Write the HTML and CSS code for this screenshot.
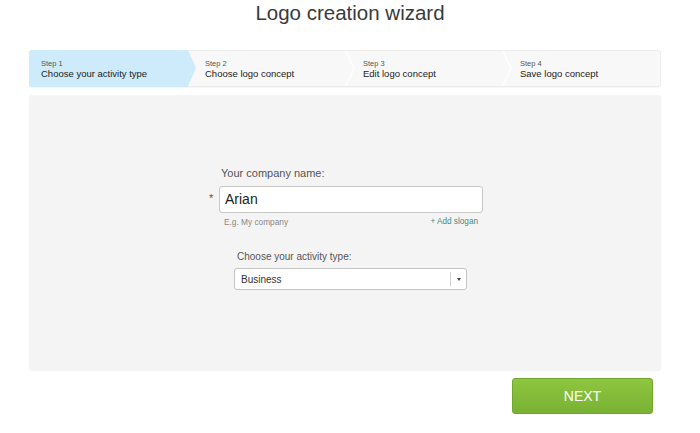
FILE: index.html
```html
<!DOCTYPE html>
<html>
<head>
<meta charset="utf-8">
<link rel="stylesheet" href="styles.css">
</head>
<body>
<div class="page">
  <h1 class="title">Logo creation wizard</h1>
  <div class="steps">
    <div class="step active"><span class="step-num">Step 1</span><span class="step-name">Choose your activity type</span></div>
    <div class="step"><span class="step-num">Step 2</span><span class="step-name">Choose logo concept</span></div>
    <div class="step"><span class="step-num">Step 3</span><span class="step-name">Edit logo concept</span></div>
    <div class="step last"><span class="step-num">Step 4</span><span class="step-name">Save logo concept</span></div>
  </div>
  <div class="panel">
    <div class="form">
      <label class="label">Your company name:</label>
      <div class="input-row">
        <span class="req">*</span>
        <div class="input">Arian</div>
      </div>
      <div class="hint-row">
        <span class="hint">E.g. My company</span>
        <span class="slogan">+ Add slogan</span>
      </div>
      <div class="activity">
        <label class="label small">Choose your activity type:</label>
        <div class="select">
          <span class="select-value">Business</span>
          <span class="select-arrow"><span class="caret"></span></span>
        </div>
      </div>
    </div>
  </div>
  <div class="actions">
    <button class="next">NEXT</button>
  </div>
</div>
</body>
</html>
```

FILE: styles.css
```css
* { box-sizing: border-box; }
html, body { margin: 0; padding: 0; background: #fff; }
body { font-family: "Liberation Sans", Arial, sans-serif; color: #333; }
.page { width: 700px; height: 433px; overflow: hidden; }

.title {
  margin: 0;
  height: 26px;
  line-height: 25px;
  font-size: 20.5px;
  font-weight: normal;
  color: #3a3a3a;
  text-align: center;
}

.steps {
  margin: 24px 39px 0 29px;
  width: 632px;
  height: 37px;
  display: grid;
  grid-template-columns: 158px 158px 157px 159px;
  background: #f8f8f8;
  border: 1px solid #ececec;
  border-radius: 3px;
  box-shadow: 0 1px 1px rgba(0,0,0,0.04);
}
.step {
  position: relative;
  display: flex;
  flex-direction: column;
  justify-content: center;
  padding-left: 11px;
  padding-top: 1px;
  color: #333;
}
.step + .step { padding-left: 17px; }
.step-num { font-size: 7.5px; line-height: 9px; color: #555; }
.step-name { font-size: 9.5px; line-height: 12px; color: #222; }

.step.active { background: #cdebfb; margin: -1px 0 -1px -1px; padding-left: 12px; border-radius: 3px 0 0 3px; z-index: 2; }
.step.active::after {
  content: "";
  position: absolute;
  left: 100%;
  top: 0;
  border-left: 8px solid #cdebfb;
  border-top: 18.5px solid transparent;
  border-bottom: 18.5px solid transparent;
}
.step:not(.active):not(.last)::after {
  content: "";
  position: absolute;
  right: -9px;
  top: 0;
  width: 10px;
  height: 35px;
  background: #fdfdfd;
  clip-path: polygon(0 0, 2px 0, 10px 50%, 2px 100%, 0 100%, 8px 50%);
  z-index: 1;
}

.panel {
  margin: 8px 0 0 29px;
  width: 632px;
  height: 275px;
  background: #f4f4f4;
  border-radius: 3px;
  box-shadow: 0 1px 1px rgba(0,0,0,0.05);
  padding: 71px 0 0 180px;
}
.form { width: 310px; display: flex; flex-direction: column; }
.label { display: block; font-size: 11px; line-height: 14px; color: #555; padding-left: 12px; }
.input-row { display: flex; align-items: center; margin-top: 6px; }
.req { width: 10px; font-size: 11px; color: #555; margin-top: -4px; }
.input {
  width: 264px;
  height: 27px;
  background: #fff;
  border: 1px solid #c8c8c8;
  border-radius: 3px;
  font-size: 14px;
  line-height: 25px;
  padding-left: 5px;
  color: #222;
}
.hint-row { display: flex; justify-content: space-between; width: 264px; margin-left: 10px; margin-top: 3px; padding: 0 5px; font-size: 8.3px; line-height: 12px; }
.hint { color: #888; }
.slogan { color: #3e8b84; font-size: 8.2px; }

.activity { margin-top: 23px; margin-left: 25px; }
.activity .label { font-size: 10px; line-height: 12px; padding-left: 3px; }
.select {
  margin-top: 5px;
  width: 233px;
  height: 22px;
  background: #fff;
  border: 1px solid #c4c4c4;
  border-radius: 3px;
  display: flex;
  align-items: center;
  justify-content: space-between;
}
.select-value { font-size: 10px; padding-left: 6px; color: #333; }
.select-arrow { width: 16px; height: 14px; border-left: 1px solid #cfcfcf; display: flex; align-items: center; justify-content: center; }
.caret { width: 0; height: 0; border-left: 2px solid transparent; border-right: 2px solid transparent; border-top: 3px solid #444; }

.actions { display: flex; justify-content: flex-end; width: 653px; margin-top: 8px; }
.next {
  width: 141px;
  height: 36px;
  border: 1px solid #6fa82b;
  border-radius: 3px;
  background: linear-gradient(#8ec641, #79b232);
  color: #fff;
  font-family: "Liberation Sans", Arial, sans-serif;
  font-size: 14px;
  padding: 0;
  cursor: pointer;
}
```
